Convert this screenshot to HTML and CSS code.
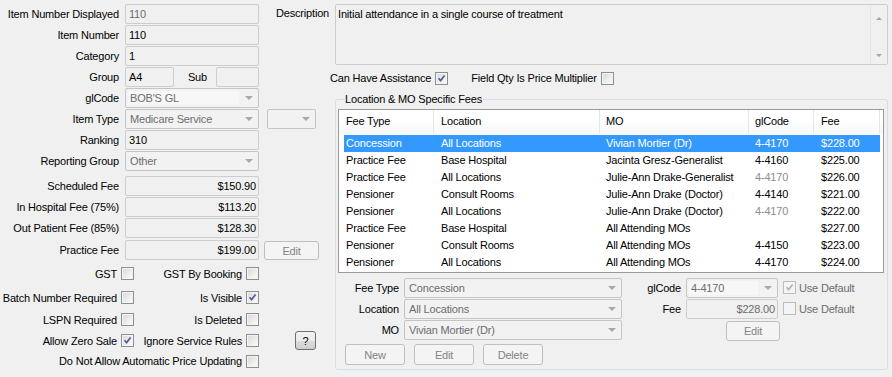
FILE: index.html
```html
<!DOCTYPE html>
<html>
<head>
<meta charset="utf-8">
<link rel="stylesheet" href="styles.css">
</head>
<body>
<div class="form">
  <div class="tl">
    <div class="row"><span class="lbl">Item Number Displayed</span><div class="tb w134 dis">110</div></div>
    <div class="row"><span class="lbl">Item Number</span><div class="tb w134">110</div></div>
    <div class="row"><span class="lbl">Category</span><div class="tb w134">1</div></div>
  </div>

  <div class="desc">
    <span class="desc-lbl">Description</span>
    <div class="memo">
      <div class="memo-text">Initial attendance in a single course of treatment</div>
      <div class="vscroll"><span class="arr up"></span><span class="arr down"></span></div>
    </div>
  </div>

  <div class="bl">
    <div class="row"><span class="lbl">Group</span><div class="tb w49">A4</div><span class="sub-lbl">Sub</span><div class="tb w43"></div></div>
    <div class="row"><span class="lbl">glCode</span><div class="cmb w134"><span class="cmb-txt edit">BOB'S GL</span><span class="tri"></span></div></div>
    <div class="row"><span class="lbl">Item Type</span><div class="cmb w134"><span class="cmb-txt">Medicare Service</span><span class="tri"></span></div><div class="cmb w49 ml8"><span class="cmb-txt"></span><span class="tri"></span></div></div>
    <div class="row"><span class="lbl">Ranking</span><div class="tb w134">310</div></div>
    <div class="row"><span class="lbl">Reporting Group</span><div class="cmb w134"><span class="cmb-txt">Other</span><span class="tri"></span></div></div>

    <div class="fees">
      <div class="row"><span class="lbl">Scheduled Fee</span><div class="tb w134 num">$150.90</div></div>
      <div class="row"><span class="lbl">In Hospital Fee (75%)</span><div class="tb w134 num">$113.20</div></div>
      <div class="row"><span class="lbl">Out Patient Fee (85%)</span><div class="tb w134 num">$128.30</div></div>
      <div class="row r-practice"><span class="lbl">Practice Fee</span><div class="tb w134 num">$199.00</div><span class="btn dis b-edit1">Edit</span></div>
    </div>

    <div class="chk-grid">
      <span class="cl c1">GST</span><span class="cb"></span>
      <span class="cl c3">GST By Booking</span><span class="cb"></span><span></span>

      <span class="cl c1">Batch Number Required</span><span class="cb"></span>
      <span class="cl c3">Is Visible</span><span class="cb on"><svg viewBox="0 0 11 11" width="11" height="11"><path d="M2.5 5.2 L4.6 7.6 L8.6 2.4" fill="none" stroke="#4b5e9a" stroke-width="1.7"/></svg></span><span></span>

      <span class="cl c1">LSPN Required</span><span class="cb"></span>
      <span class="cl c3">Is Deleted</span><span class="cb"></span><span></span>

      <span class="cl c1">Allow Zero Sale</span><span class="cb on"><svg viewBox="0 0 11 11" width="11" height="11"><path d="M2.5 5.2 L4.6 7.6 L8.6 2.4" fill="none" stroke="#4b5e9a" stroke-width="1.7"/></svg></span>
      <span class="cl c3">Ignore Service Rules</span><span class="cb"></span><span class="qcell"><span class="btn qbtn">?</span></span>

      <span class="cl wide">Do Not Allow Automatic Price Updating</span><span class="cb"></span><span></span>
    </div>
  </div>

  <div class="right">
    <div class="chkrow">
      <span>Can Have Assistance</span><span class="cb on ml4"><svg viewBox="0 0 11 11" width="11" height="11"><path d="M2.5 5.2 L4.6 7.6 L8.6 2.4" fill="none" stroke="#4b5e9a" stroke-width="1.7"/></svg></span>
      <span class="ml23">Field Qty Is Price Multiplier</span><span class="cb ml4"></span>
    </div>

    <fieldset class="grp">
      <legend>Location &amp; MO Specific Fees</legend>
      <div class="lv">
        <div class="lv-head">
          <span class="hc w1">Fee Type</span><span class="hc w2">Location</span><span class="hc w3">MO</span><span class="hc w4">glCode</span><span class="hc w5">Fee</span>
        </div>
        <div class="lv-body">
          <div class="lr sel"><span class="c w1">Concession</span><span class="c w2">All Locations</span><span class="c w3">Vivian Mortier (Dr)</span><span class="c w4">4-4170</span><span class="c w5">$228.00</span></div>
          <div class="lr"><span class="c w1">Practice Fee</span><span class="c w2">Base Hospital</span><span class="c w3">Jacinta Gresz-Generalist</span><span class="c w4">4-4160</span><span class="c w5">$225.00</span></div>
          <div class="lr"><span class="c w1">Practice Fee</span><span class="c w2">All Locations</span><span class="c w3">Julie-Ann Drake-Generalist</span><span class="c w4 grey">4-4170</span><span class="c w5">$226.00</span></div>
          <div class="lr"><span class="c w1">Pensioner</span><span class="c w2">Consult Rooms</span><span class="c w3">Julie-Ann Drake (Doctor)</span><span class="c w4">4-4140</span><span class="c w5">$221.00</span></div>
          <div class="lr"><span class="c w1">Pensioner</span><span class="c w2">All Locations</span><span class="c w3">Julie-Ann Drake (Doctor)</span><span class="c w4 grey">4-4170</span><span class="c w5">$222.00</span></div>
          <div class="lr"><span class="c w1">Practice Fee</span><span class="c w2">Base Hospital</span><span class="c w3">All Attending MOs</span><span class="c w4"></span><span class="c w5">$227.00</span></div>
          <div class="lr"><span class="c w1">Pensioner</span><span class="c w2">Consult Rooms</span><span class="c w3">All Attending MOs</span><span class="c w4">4-4150</span><span class="c w5">$223.00</span></div>
          <div class="lr"><span class="c w1">Pensioner</span><span class="c w2">All Locations</span><span class="c w3">All Attending MOs</span><span class="c w4">4-4170</span><span class="c w5">$224.00</span></div>
        </div>
      </div>

      <div class="edit-area">
        <div class="ea-left">
          <div class="erow"><span class="elbl">Fee Type</span><div class="cmb w218"><span class="cmb-txt">Concession</span><span class="tri"></span></div></div>
          <div class="erow"><span class="elbl">Location</span><div class="cmb w218"><span class="cmb-txt">All Locations</span><span class="tri"></span></div></div>
          <div class="erow"><span class="elbl">MO</span><div class="cmb w218"><span class="cmb-txt">Vivian Mortier (Dr)</span><span class="tri"></span></div></div>
          <div class="btnrow"><span class="btn dis bw60">New</span><span class="btn dis bw60">Edit</span><span class="btn dis bw60">Delete</span></div>
        </div>
        <div class="ea-right">
          <div class="erow"><span class="rlbl">glCode</span><div class="cmb w92"><span class="cmb-txt edit">4-4170</span><span class="tri"></span></div><span class="cb dcb on ml5"><svg viewBox="0 0 11 11" width="11" height="11"><path d="M2.5 5.2 L4.6 7.6 L8.6 2.4" fill="none" stroke="#b4b4b4" stroke-width="1.7"/></svg></span><span class="dtxt ml3">Use Default</span></div>
          <div class="erow"><span class="rlbl">Fee</span><div class="tb w92 num dis">$228.00</div><span class="cb dcb ml5"></span><span class="dtxt ml3">Use Default</span></div>
          <div class="erow"><span class="btn dis b-edit2">Edit</span></div>
        </div>
      </div>
    </fieldset>
  </div>
</div>
</body>
</html>
```

FILE: styles.css
```css
* { box-sizing: border-box; }

body {
  margin: 0;
  width: 892px;
  height: 377px;
  overflow: hidden;
  background: #f0f0f0;
  font-family: "Liberation Sans", Arial, sans-serif;
  font-size: 11px;
  letter-spacing: -0.18px;
  color: #000;
}

.form {
  display: grid;
  grid-template-columns: 272px 58px 562px;
  grid-template-rows: 63px auto;
  padding-top: 4px;
}

.tl { grid-column: 1; grid-row: 1; }
.desc { grid-column: 2 / 4; grid-row: 1; display: flex; align-items: flex-start; }
.bl { grid-column: 1 / 3; grid-row: 2; }
.right { grid-column: 3; grid-row: 2; }

.row {
  display: flex;
  align-items: flex-start;
  height: 21px;
}

.lbl {
  width: 119px;
  margin-right: 6px;
  text-align: right;
  line-height: 20px;
  white-space: nowrap;
}

.tb {
  height: 20px;
  border: 1px solid #cdcdcd;
  border-radius: 2px;
  background: #f0f0f0;
  padding: 0 3px;
  line-height: 18px;
  white-space: nowrap;
  overflow: hidden;
}

.tb.num { text-align: right; padding-right: 2px; }
.dis { color: #6d6d6d; }

.w134 { width: 134px; }
.w49 { width: 49px; }
.w43 { width: 43px; }
.w218 { width: 218px; }
.w92 { width: 92px; }
.ml8 { margin-left: 8px; }
.ml4 { margin-left: 4px; }
.ml5 { margin-left: 5px; }
.ml3 { margin-left: 3px; }
.ml23 { margin-left: 23px; }

.sub-lbl {
  width: 33px;
  margin-right: 9px;
  text-align: right;
  line-height: 20px;
}

.cmb {
  position: relative;
  height: 20px;
  border: 1px solid #c5c5c5;
  border-radius: 2px;
  background: #f2f2f2;
  color: #6d6d6d;
  display: flex;
  align-items: center;
  padding: 2px;
}

.cmb-txt {
  flex: 1;
  height: 14px;
  line-height: 14px;
  padding-left: 2px;
  white-space: nowrap;
  margin-right: 17px;
}

.cmb-txt.edit { background: #f7f7f7; }

.tri {
  position: absolute;
  right: 5px;
  top: 7px;
  width: 0;
  height: 0;
  border-left: 4px solid transparent;
  border-right: 4px solid transparent;
  border-top: 4px solid #a8a8a8;
}

/* memo */
.desc-lbl {
  width: 63px;
  padding-left: 4px;
  line-height: 18px;
  white-space: nowrap;
}

.memo {
  width: 553px;
  height: 61px;
  border: 1px solid #cdcdcd;
  border-radius: 2px;
  background: #f0f0f0;
  display: flex;
}

.memo-text {
  flex: 1;
  padding: 2px 2px;
  line-height: 14px;
}

.vscroll {
  position: relative;
  width: 17px;
  height: 59px;
  background: #f0f0f0;
  border-left: 1px solid #e6e6e6;
}

.arr {
  position: absolute;
  left: 5px;
  width: 0;
  height: 0;
  border-left: 3px solid transparent;
  border-right: 3px solid transparent;
}
.arr.up { top: 12px; border-bottom: 3px solid #a5a5a5; }
.arr.down { bottom: 7px; border-top: 3px solid #a5a5a5; }

/* fees */
.fees { margin-top: 4px; }
.r-practice { margin-top: 1px; }

.btn {
  display: inline-flex;
  align-items: center;
  justify-content: center;
  height: 21px;
  border: 1px solid #acacac;
  border-radius: 3px;
  background: linear-gradient(#f2f2f2, #ebebeb 50%, #dddddd 50%, #cfcfcf);
}

.btn.dis {
  border-color: #bfbfbf;
  background: #f4f4f4;
  color: #838383;
}

.b-edit1 {
  width: 55px;
  height: 19px;
  margin-left: 5px;
  margin-top: 1px;
}

/* checkbox grid */
.chk-grid {
  display: grid;
  grid-template-columns: 121px 13px 112px 13px 1fr;
  grid-template-rows: 25px 23px 21px 21px 20px;
  align-items: center;
}

.cl {
  text-align: right;
  padding-right: 4px;
  white-space: nowrap;
}

.cl.wide { grid-column: 1 / 4; }

.cb {
  display: inline-flex;
  align-items: center;
  justify-content: center;
  width: 13px;
  height: 13px;
  border: 1px solid #8e8f8f;
  background: linear-gradient(135deg, #d8d8d8, #f6f6f6 80%);
  box-shadow: inset 0 0 0 1px #f4f4f4;
}

.cb svg { display: block; }

.dcb {
  border-color: #bcbcbc;
  background: #f4f4f4;
  box-shadow: none;
}

.qcell { padding-left: 36px; display: flex; align-items: center; }
.qbtn {
  width: 21px;
  height: 19px;
  font-size: 11px;
  border-color: #707070;
}

/* right side */
.chkrow {
  display: flex;
  align-items: center;
  height: 22px;
  white-space: nowrap;
}

.grp {
  margin: 4px 0 0 5px;
  width: 553px;
  padding: 0 3px 4px 2px;
  border: 1px solid #d5dfe5;
  border-radius: 3px;
  min-width: 0;
}

.grp legend {
  margin-left: 6px;
  padding: 0 1px;
  line-height: 13px;
  font-size: 11px;
}

.lv {
  margin-top: 3px;
  width: 546px;
  height: 164px;
  border: 1px solid #9a9a9a;
  background: #fff;
}

.lv-head {
  display: flex;
  height: 24px;
  background: linear-gradient(#ffffff, #ffffff 45%, #f6f7f9);
}

.hc {
  height: 24px;
  line-height: 23px;
  padding-left: 6px;
  border-right: 1px solid #e5e7ea;
  white-space: nowrap;
}

.hc.w1 { width: 95px; padding-left: 7px; }
.hc.w2 { width: 166px; padding-left: 7px; }
.hc.w3 { width: 149px; }
.hc.w4 { width: 65px; }
.hc.w5 { width: 66px; padding-left: 7px; }

.lv-body { padding-top: 1px; }

.lr {
  display: flex;
  margin-left: 5px;
  width: 536px;
  height: 17px;
  line-height: 17px;
}

.lr.sel { background: #3399ff; color: #fff; }

.c { white-space: nowrap; overflow: hidden; padding-left: 6px; }
.c.w1 { width: 90px; padding-left: 2px; }
.c.w2 { width: 166px; padding-left: 7px; }
.c.w3 { width: 149px; }
.c.w4 { width: 65px; }
.c.w5 { width: 66px; padding-left: 7px; }
.grey { color: #8d8d8d; }

/* edit area */
.edit-area {
  display: flex;
  margin-top: 4px;
}

.ea-left { width: 284px; }

.erow {
  display: flex;
  align-items: center;
  height: 21px;
  white-space: nowrap;
}

.elbl {
  width: 61px;
  margin-right: 5px;
  text-align: right;
}

.rlbl {
  width: 59px;
  margin-right: 5px;
  text-align: right;
}

.btnrow {
  display: flex;
  gap: 9px;
  margin-top: 4px;
  margin-left: 7px;
}

.bw60 { width: 60px; }

.b-edit2 {
  width: 54px;
  height: 20px;
  margin-left: 104px;
  margin-top: 2px;
}

.dtxt { color: #6d6d6d; }
```
